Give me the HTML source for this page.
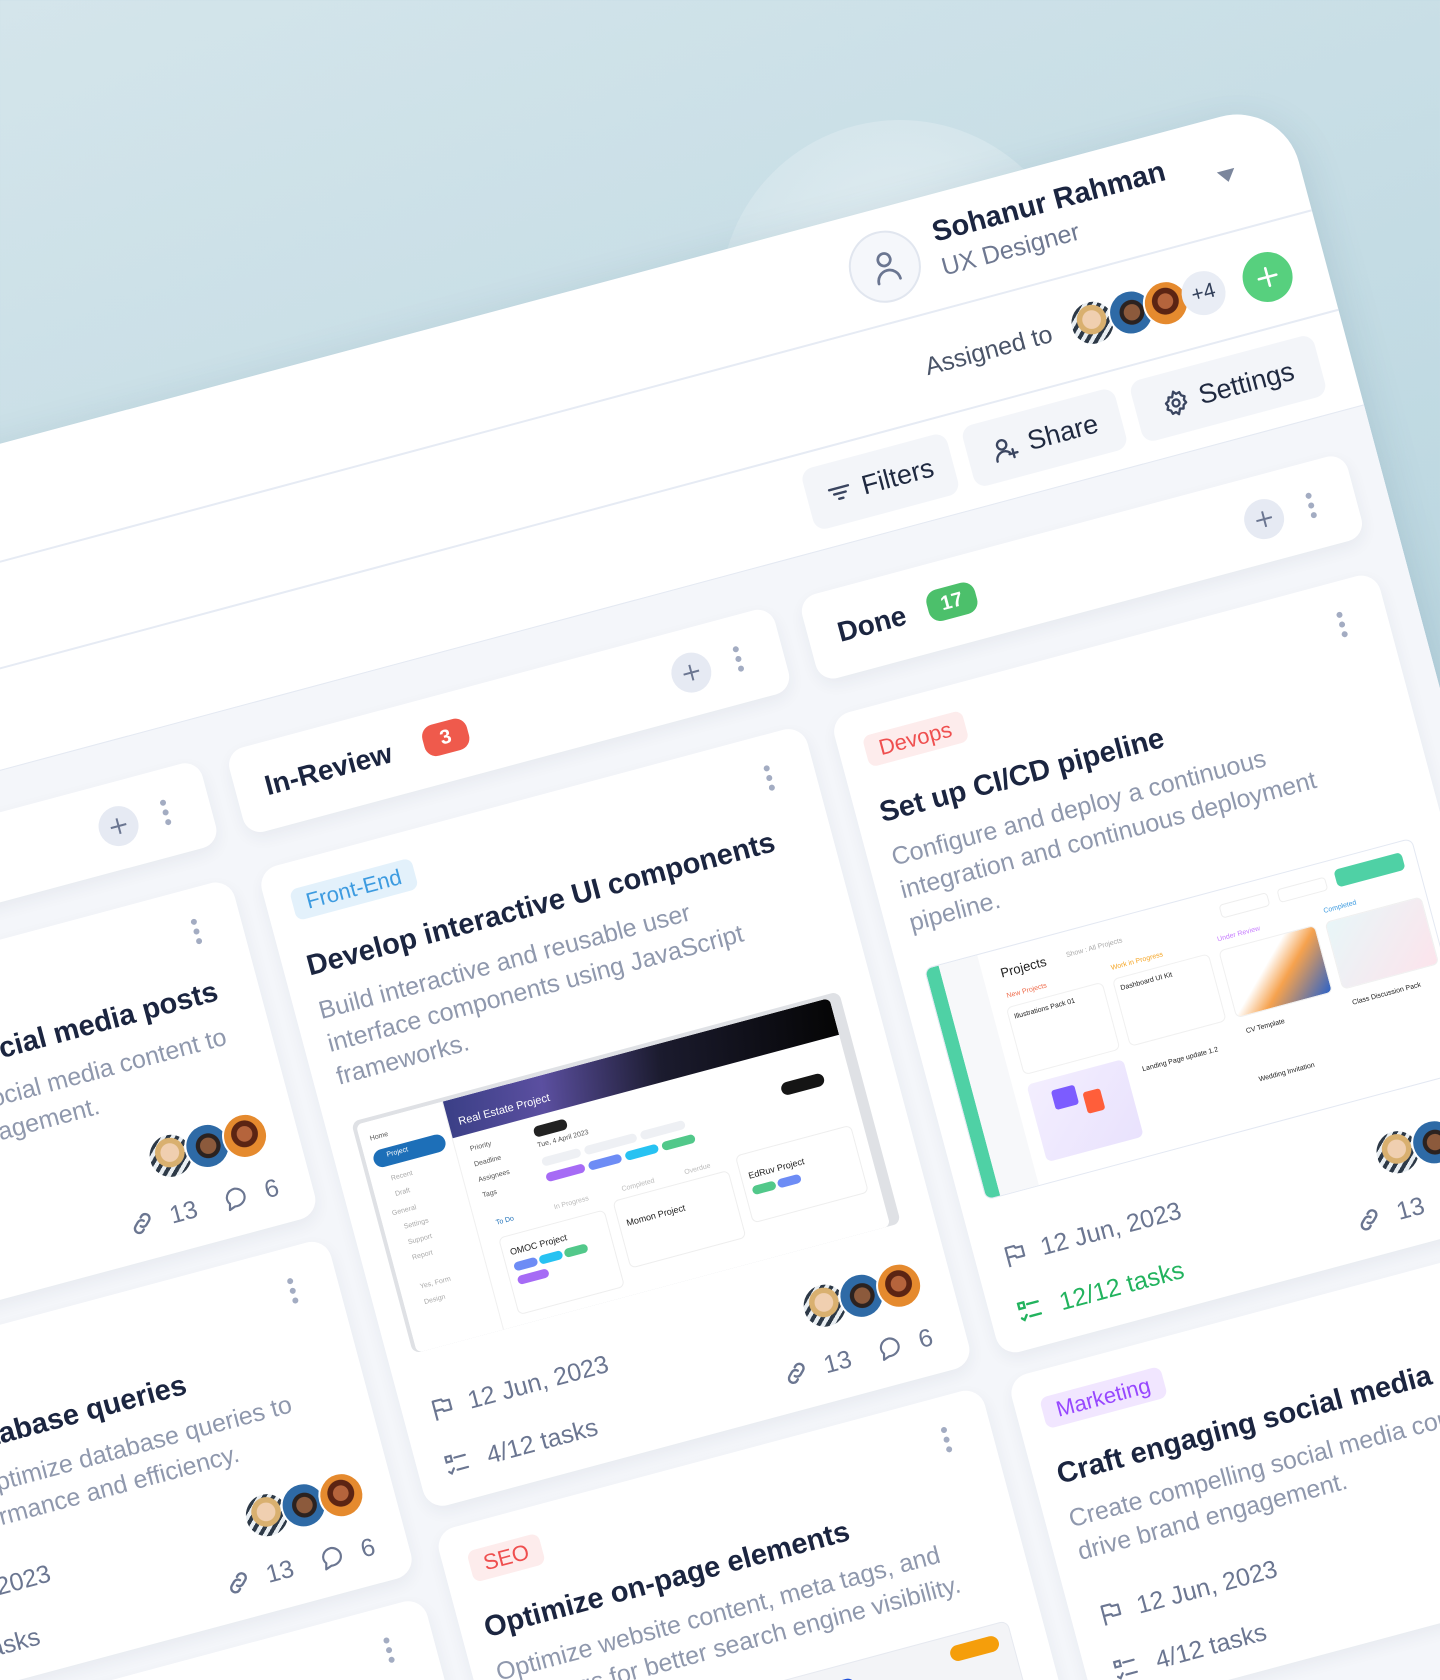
<!DOCTYPE html>
<html><head><meta charset="utf-8">
<style>
*{box-sizing:border-box;margin:0;padding:0}
html,body{width:1440px;height:1680px;overflow:hidden}
body{font-family:"Liberation Sans",sans-serif;background:linear-gradient(160deg,#d4e5eb 0%,#bfd9e2 45%,#a8cad7 100%);position:relative}
.globe{position:absolute;left:720px;top:120px;width:360px;height:360px;border-radius:50%;background:radial-gradient(circle at 50% 40%,rgba(235,243,246,.75),rgba(220,234,239,.5) 60%,rgba(210,228,235,0) 72%)}
.frame{position:absolute;left:225px;top:752px;width:0;height:0;transform:rotate(-15deg);transform-origin:0 0}
.abs{position:absolute}
.win{position:absolute;left:-1600px;top:-356px;width:2790px;height:2700px;background:#fff;border-top-right-radius:64px;box-shadow:0 10px 40px rgba(40,80,110,.15)}
.board{position:absolute;left:-1600px;top:-41px;width:2790px;height:2600px;background:#f4f6fa;border-top:1px solid #e4e9f2}
.hline{position:absolute;left:-1600px;width:2790px;height:2px;background:#e6ebf4}
.btn{position:absolute;top:-123px;height:63px;background:#f3f5f9;border-radius:12px;display:flex;align-items:center;justify-content:center;gap:10px;font-size:27px;color:#1f2940}
.colh{position:absolute;top:0;width:565px;height:87px;background:#fff;border-radius:18px;box-shadow:0 6px 16px rgba(30,50,90,.06)}
.colh .t{position:absolute;left:30px;top:28px;font-size:28px;font-weight:bold;color:#1b2540;line-height:32px}
.badge{position:absolute;height:32px;border-radius:12px;color:#fff;font-weight:bold;font-size:20px;line-height:32px;text-align:center}
.plus{position:absolute;left:451px;top:24px;width:40px;height:40px;border-radius:50%;background:#e6eaf3}
.dots{position:absolute;width:6px}
.dots i{display:block;width:6px;height:6px;border-radius:50%;background:#a3acc2;margin-bottom:4px}
.card{position:absolute;width:565px;background:#fff;border-radius:20px;box-shadow:0 6px 16px rgba(30,50,90,.06);overflow:hidden}
.tag{position:absolute;left:26px;top:27px;height:32px;padding:0 14px;border-radius:8px;font-size:22px;line-height:32px}
.ttl{position:absolute;left:24px;top:90px;font-size:29px;font-weight:bold;color:#1b2540;line-height:33px;white-space:nowrap}
.desc{position:absolute;left:24px;top:135px;font-size:25px;line-height:34px;color:#8f98ad;white-space:nowrap}
.img{position:absolute;left:26px;width:505px;height:240px;border-radius:8px;overflow:hidden}
.meta{position:absolute;font-size:25px;line-height:28px;color:#6b7691;white-space:nowrap}
.ico{position:absolute}
.av{position:absolute;width:46px;height:46px;border-radius:50%;border:2px solid #fff}
.a1{background:radial-gradient(circle at 50% 42%,#f0cfb0 0 28%,#d9b06f 30% 45%,transparent 47%),repeating-linear-gradient(135deg,#2d3947 0 4px,#e9eef2 4px 8px)}
.a2{background:radial-gradient(circle at 52% 50%,#8c5a3c 0 26%,#2b2220 28% 40%,transparent 42%),#2e6aa6}
.a3{background:radial-gradient(circle at 50% 45%,#b5643c 0 24%,#5b2413 26% 42%,transparent 44%),#e58a2e}
.s{position:absolute;font-size:7px;color:#555;white-space:nowrap}
.chip{position:absolute;height:9px;border-radius:5px}
</style></head><body>
<div class="globe"></div>
<div class="frame">
  <div class="win"></div>
  <div class="hline" style="top:-243px"></div>
  <div class="hline" style="top:-140px"></div>
  <div class="board"></div>

  <div class="abs" style="left:727px;top:-334px;width:72px;height:72px;border-radius:50%;background:#f5f7fb;border:2px solid #e1e6ef">
    <svg class="abs" style="left:18px;top:16px" width="34" height="36" viewBox="0 0 24 26" fill="none" stroke="#6b7691" stroke-width="2" stroke-linecap="round"><circle cx="12" cy="8" r="4.5"/><path d="M4 24a8 8 0 0 1 16 0"/></svg>
  </div>
  <div class="abs" style="left:818px;top:-334px;font-size:29px;font-weight:bold;color:#1b2540;line-height:32px;white-space:nowrap">Sohanur Rahman</div>
  <div class="abs" style="left:818px;top:-296px;font-size:25px;color:#6e7891;line-height:28px;white-space:nowrap">UX Designer</div>
  <svg class="abs" style="left:1107px;top:-304px" width="20" height="14" viewBox="0 0 20 14"><path d="M1 1h18L10 13z" fill="#7b869c"/></svg>

  <div class="abs" style="left:724px;top:-204px;width:183px;text-align:right;font-size:25px;color:#4a5468;line-height:28px">Assigned to</div>
  <div class="av a1" style="left:926px;top:-213px"></div>
  <div class="av a2" style="left:966px;top:-213px"></div>
  <div class="av a3" style="left:1002px;top:-213px"></div>
  <div class="abs" style="left:1042px;top:-212px;width:44px;height:44px;border-radius:50%;background:#e9edf5;font-size:21px;color:#33405a;text-align:center;line-height:44px">+4</div>
  <div class="abs" style="left:1105px;top:-214px;width:50px;height:50px;border-radius:50%;background:#57d07e">
    <svg class="abs" style="left:13px;top:13px" width="24" height="24" viewBox="0 0 24 24" stroke="#fff" stroke-width="2.6" stroke-linecap="round"><path d="M12 3v18M3 12h18"/></svg>
  </div>

  <div class="btn" style="left:628px;width:150px">
    <svg width="26" height="26" viewBox="0 0 24 24" fill="none" stroke="#3a4560" stroke-width="2.2" stroke-linecap="round"><path d="M3 7h18M6.5 12h11M10 17h4"/></svg>Filters</div>
  <div class="btn" style="left:794px;width:158px">
    <svg width="28" height="28" viewBox="0 0 24 24" fill="none" stroke="#3a4560" stroke-width="2" stroke-linecap="round"><circle cx="10" cy="8" r="4"/><path d="M3 21a7 7 0 0 1 12-5M18 14v7M14.5 17.5h7"/></svg>Share</div>
  <div class="btn" style="left:968px;width:190px">
    <svg width="28" height="28" viewBox="0 0 24 24" fill="none" stroke="#3a4560" stroke-width="2" stroke-linejoin="round"><path d="M12 2l2 2.5 3-.8.8 3 2.7 1.6-1.3 2.7 1.3 2.7-2.7 1.6-.8 3-3-.8L12 22l-2-2.5-3 .8-.8-3L3.5 15.7 4.8 13 3.5 10.3 6.2 8.7l.8-3 3 .8z"/><circle cx="12" cy="12" r="3"/></svg>Settings</div>

  <div class="colh" style="left:-593px"><div class="t">In Progress</div><div class="badge" style="left:210px;top:27px;width:46px;background:#f5a524">5</div>
    <div class="plus"><svg class="abs" style="left:10px;top:10px" width="20" height="20" viewBox="0 0 20 20" stroke="#6b7691" stroke-width="2"><path d="M10 2v16M2 10h16"/></svg></div>
    <div class="dots" style="left:517px;top:30px"><i></i><i></i><i></i></div></div>
  <div class="colh" style="left:0"><div class="t">In-Review</div><div class="badge" style="left:194px;top:27px;width:46px;background:#ef5a4c">3</div>
    <div class="plus"><svg class="abs" style="left:10px;top:10px" width="20" height="20" viewBox="0 0 20 20" stroke="#6b7691" stroke-width="2"><path d="M10 2v16M2 10h16"/></svg></div>
    <div class="dots" style="left:517px;top:30px"><i></i><i></i><i></i></div></div>
  <div class="colh" style="left:593px"><div class="t">Done</div><div class="badge" style="left:123px;top:27px;width:50px;background:#4cc06b">17</div>
    <div class="plus"><svg class="abs" style="left:10px;top:10px" width="20" height="20" viewBox="0 0 20 20" stroke="#6b7691" stroke-width="2"><path d="M10 2v16M2 10h16"/></svg></div>
    <div class="dots" style="left:517px;top:30px"><i></i><i></i><i></i></div></div>

  <div class="card" style="left:-593px;top:123px;height:348px">
    <div class="tag" style="background:#f1e6ff;color:#9747ff">Marketing</div>
    <div class="dots" style="left:516px;top:30px"><i></i><i></i><i></i></div>
    <div class="ttl">Plan and publish social media posts</div>
    <div class="desc">Design and schedule social media content to<br>increase audience engagement.</div>
    <div class="av a1" style="left:413px;top:230px"></div><div class="av a2" style="left:451px;top:230px"></div><div class="av a3" style="left:490px;top:230px"></div>
    <svg class="ico" style="left:27px;top:240px" width="26" height="26" viewBox="0 0 24 24" fill="none" stroke="#6b7691" stroke-width="2" stroke-linejoin="round"><path d="M5 22V4h8l1 2h6v9h-7l-1-2H5"/></svg>
    <div class="meta" style="left:67px;top:239px">12 Jun, 2023</div>
    <svg class="ico" style="left:27px;top:298px" width="26" height="26" viewBox="0 0 24 24" fill="none" stroke="#6b7691" stroke-width="2" stroke-linecap="round"><path d="M3 3h5v5H3zM11 5.5h10M11 17h10M3 17l2 2 3-4"/></svg>
    <div class="meta" style="left:71px;top:297px">4/12 tasks</div>
    <svg class="ico" style="left:378px;top:298px" width="26" height="26" viewBox="0 0 24 24" fill="none" stroke="#6b7691" stroke-width="2.2" stroke-linecap="round"><path d="M10 14a4 4 0 0 0 5.7 0l3-3a4 4 0 0 0-5.7-5.7l-1 1M14 10a4 4 0 0 0-5.7 0l-3 3a4 4 0 0 0 5.7 5.7l1-1"/></svg>
    <div class="meta" style="left:420px;top:297px">13</div>
    <svg class="ico" style="left:476px;top:298px" width="26" height="26" viewBox="0 0 24 24" fill="none" stroke="#6b7691" stroke-width="2" stroke-linejoin="round"><path d="M12 3a9 8 0 0 0-7.5 12.5L3 21l5.5-2A9 8 0 1 0 12 3z"/></svg>
    <div class="meta" style="left:518px;top:297px">6</div>
  </div>
  <div class="card" style="left:-593px;top:495px;height:348px">
    <div class="tag" style="background:#e3f1fb;color:#3d9be0">Back-End</div>
    <div class="dots" style="left:516px;top:30px"><i></i><i></i><i></i></div>
    <div class="ttl">Optimize database queries</div>
    <div class="desc">Analyze and optimize database queries to<br>improve performance and efficiency.</div>
    <div class="av a1" style="left:413px;top:230px"></div><div class="av a2" style="left:451px;top:230px"></div><div class="av a3" style="left:490px;top:230px"></div>
    <svg class="ico" style="left:27px;top:240px" width="26" height="26" viewBox="0 0 24 24" fill="none" stroke="#6b7691" stroke-width="2" stroke-linejoin="round"><path d="M5 22V4h8l1 2h6v9h-7l-1-2H5"/></svg>
    <div class="meta" style="left:67px;top:239px">12 Jun, 2023</div>
    <svg class="ico" style="left:27px;top:298px" width="26" height="26" viewBox="0 0 24 24" fill="none" stroke="#6b7691" stroke-width="2" stroke-linecap="round"><path d="M3 3h5v5H3zM11 5.5h10M11 17h10M3 17l2 2 3-4"/></svg>
    <div class="meta" style="left:71px;top:297px">4/12 tasks</div>
    <svg class="ico" style="left:378px;top:298px" width="26" height="26" viewBox="0 0 24 24" fill="none" stroke="#6b7691" stroke-width="2.2" stroke-linecap="round"><path d="M10 14a4 4 0 0 0 5.7 0l3-3a4 4 0 0 0-5.7-5.7l-1 1M14 10a4 4 0 0 0-5.7 0l-3 3a4 4 0 0 0 5.7 5.7l1-1"/></svg>
    <div class="meta" style="left:420px;top:297px">13</div>
    <svg class="ico" style="left:476px;top:298px" width="26" height="26" viewBox="0 0 24 24" fill="none" stroke="#6b7691" stroke-width="2" stroke-linejoin="round"><path d="M12 3a9 8 0 0 0-7.5 12.5L3 21l5.5-2A9 8 0 1 0 12 3z"/></svg>
    <div class="meta" style="left:518px;top:297px">6</div>
  </div>
  <div class="card" style="left:-593px;top:867px;height:348px">
    <div class="dots" style="left:516px;top:30px"><i></i><i></i><i></i></div>
    <div class="ttl">Write API documentation</div>
  </div>

  <div class="card" style="left:0;top:123px;height:662px">
    <div class="tag" style="background:#e3f1fb;color:#3d9be0">Front-End</div>
    <div class="dots" style="left:516px;top:30px"><i></i><i></i><i></i></div>
    <div class="ttl">Develop interactive UI components</div>
    <div class="desc">Build interactive and reusable user<br>interface components using JavaScript<br>frameworks.</div>
    <div class="img" style="top:267px;background:#dfe1e5">
      <div class="abs" style="left:4px;top:4px;width:490px;height:236px;background:#fff;border-radius:6px;overflow:hidden">
        <div class="abs" style="left:0;top:0;width:90px;height:236px;background:#fff;border-right:1px solid #f0f0f0"></div>
        <div class="s" style="left:10px;top:14px">Home</div>
        <div class="abs" style="left:8px;top:30px;width:74px;height:18px;border-radius:9px;background:#1d6fb8"></div>
        <div class="s" style="left:22px;top:34px;color:#fff">Project</div>
        <div class="s" style="left:20px;top:58px;color:#aaa">Recent</div><div class="s" style="left:20px;top:74px;color:#aaa">Draft</div>
        <div class="s" style="left:12px;top:92px;color:#aaa">General</div><div class="s" style="left:20px;top:108px;color:#aaa">Settings</div>
        <div class="s" style="left:20px;top:124px;color:#aaa">Support</div><div class="s" style="left:20px;top:140px;color:#aaa">Report</div>
        <div class="s" style="left:20px;top:170px;color:#aaa">Yes, Form</div><div class="s" style="left:20px;top:186px;color:#aaa">Design</div>
        <div class="abs" style="left:90px;top:0;width:400px;height:38px;background:linear-gradient(100deg,#3a3f86 0%,#5b4fa0 25%,#1b1b2e 55%,#050505 100%)"></div>
        <div class="s" style="left:100px;top:18px;color:#fff;font-size:11px">Real Estate Project</div>
        <div class="s" style="left:104px;top:50px">Priority</div><div class="s" style="left:104px;top:66px">Deadline</div>
        <div class="s" style="left:104px;top:82px">Assignees</div><div class="s" style="left:104px;top:98px">Tags</div>
        <div class="chip" style="left:170px;top:48px;width:34px;height:11px;background:#222"></div>
        <div class="s" style="left:170px;top:64px">Tue, 4 April 2023</div>
        <div class="chip" style="left:170px;top:80px;width:40px;background:#eef0f4"></div><div class="chip" style="left:214px;top:80px;width:54px;background:#eef0f4"></div><div class="chip" style="left:272px;top:80px;width:46px;background:#eef0f4"></div>
        <div class="chip" style="left:170px;top:96px;width:40px;background:#a66bf5"></div><div class="chip" style="left:214px;top:96px;width:34px;background:#6d8cf5"></div><div class="chip" style="left:252px;top:96px;width:34px;background:#27c2f2"></div><div class="chip" style="left:290px;top:96px;width:34px;background:#52c88a"></div>
        <div class="chip" style="left:420px;top:70px;width:44px;height:13px;background:#151515;border-radius:7px"></div>
        <div class="s" style="left:110px;top:128px;color:#1d6fb8">To Do</div><div class="s" style="left:170px;top:128px;color:#bbb">In Progress</div><div class="s" style="left:240px;top:128px;color:#bbb">Completed</div><div class="s" style="left:305px;top:128px;color:#bbb">Overdue</div>
        <div class="abs" style="left:108px;top:146px;width:110px;height:80px;border:1px solid #eee;border-radius:6px"></div>
        <div class="s" style="left:116px;top:158px;color:#222;font-size:9px">OMOC Project</div>
        <div class="chip" style="left:116px;top:174px;width:24px;background:#6d8cf5"></div><div class="chip" style="left:142px;top:174px;width:24px;background:#27c2f2"></div><div class="chip" style="left:168px;top:174px;width:24px;background:#52c88a"></div>
        <div class="chip" style="left:116px;top:188px;width:32px;background:#a66bf5"></div>
        <div class="abs" style="left:228px;top:140px;width:120px;height:70px;border:1px solid #eee;border-radius:6px"></div>
        <div class="s" style="left:236px;top:160px;color:#222;font-size:9px">Momon Project</div>
        <div class="abs" style="left:358px;top:128px;width:120px;height:70px;border:1px solid #eee;border-radius:6px"></div>
        <div class="s" style="left:366px;top:146px;color:#222;font-size:9px">EdRuv Project</div>
        <div class="chip" style="left:366px;top:162px;width:24px;background:#52c88a"></div><div class="chip" style="left:392px;top:162px;width:24px;background:#6d8cf5"></div>
      </div>
    </div>
    <div class="av a1" style="left:413px;top:544px"></div><div class="av a2" style="left:451px;top:544px"></div><div class="av a3" style="left:490px;top:544px"></div>
    <svg class="ico" style="left:27px;top:554px" width="26" height="26" viewBox="0 0 24 24" fill="none" stroke="#6b7691" stroke-width="2" stroke-linejoin="round"><path d="M5 22V4h8l1 2h6v9h-7l-1-2H5"/></svg>
    <div class="meta" style="left:67px;top:553px">12 Jun, 2023</div>
    <svg class="ico" style="left:27px;top:612px" width="26" height="26" viewBox="0 0 24 24" fill="none" stroke="#6b7691" stroke-width="2" stroke-linecap="round"><path d="M3 3h5v5H3zM11 5.5h10M11 17h10M3 17l2 2 3-4"/></svg>
    <div class="meta" style="left:71px;top:611px">4/12 tasks</div>
    <svg class="ico" style="left:378px;top:612px" width="26" height="26" viewBox="0 0 24 24" fill="none" stroke="#6b7691" stroke-width="2.2" stroke-linecap="round"><path d="M10 14a4 4 0 0 0 5.7 0l3-3a4 4 0 0 0-5.7-5.7l-1 1M14 10a4 4 0 0 0-5.7 0l-3 3a4 4 0 0 0 5.7 5.7l1-1"/></svg>
    <div class="meta" style="left:420px;top:611px">13</div>
    <svg class="ico" style="left:476px;top:612px" width="26" height="26" viewBox="0 0 24 24" fill="none" stroke="#6b7691" stroke-width="2" stroke-linejoin="round"><path d="M12 3a9 8 0 0 0-7.5 12.5L3 21l5.5-2A9 8 0 1 0 12 3z"/></svg>
    <div class="meta" style="left:518px;top:611px">6</div>
  </div>
  <div class="card" style="left:0;top:808px;height:640px">
    <div class="tag" style="background:#fdecec;color:#ef4f4f">SEO</div>
    <div class="dots" style="left:516px;top:30px"><i></i><i></i><i></i></div>
    <div class="ttl">Optimize on-page elements</div>
    <div class="desc">Optimize website content, meta tags, and<br>headings for better search engine visibility.</div>
    <div class="img" style="top:233px;background:#f3f4f7;border:1px solid #e6e9f0">
      <div class="abs" style="left:300px;top:14px;width:40px;height:14px;border-radius:7px;background:#1d4ed8"></div>
      <div class="abs" style="left:440px;top:10px;width:50px;height:16px;border-radius:8px;background:#f59e0b"></div>
    </div>
  </div>

  <div class="card" style="left:593px;top:123px;height:662px">
    <div class="tag" style="background:#fdecec;color:#ef4f4f">Devops</div>
    <div class="dots" style="left:516px;top:30px"><i></i><i></i><i></i></div>
    <div class="ttl">Set up CI/CD pipeline</div>
    <div class="desc">Configure and deploy a continuous<br>integration and continuous deployment<br>pipeline.</div>
    <div class="img" style="top:267px;background:#fff;border:1px solid #e3e8f2">
      <div class="abs" style="left:0;top:0;width:14px;height:240px;background:#4fd1a5"></div>
      <div class="abs" style="left:14px;top:0;width:40px;height:240px;background:#f7f8fa"></div>
      <div class="s" style="left:72px;top:16px;font-size:13px;color:#222">Projects</div>
      <div class="s" style="left:140px;top:20px;color:#aaa">Show : All Projects</div>
      <div class="abs" style="left:300px;top:14px;width:50px;height:14px;border:1px solid #eee;border-radius:4px"></div>
      <div class="abs" style="left:360px;top:14px;width:50px;height:14px;border:1px solid #eee;border-radius:4px"></div>
      <div class="abs" style="left:420px;top:10px;width:70px;height:18px;border-radius:5px;background:#4fd1a5"></div>
      <div class="s" style="left:72px;top:44px;color:#ef6b4a">New Projects</div>
      <div class="s" style="left:180px;top:44px;color:#f5a524">Work in Progress</div>
      <div class="s" style="left:290px;top:44px;color:#c77dff">Under Review</div>
      <div class="s" style="left:400px;top:44px;color:#3d9be0">Completed</div>
      <div class="abs" style="left:68px;top:58px;width:100px;height:70px;border:1px solid #f0f0f0;border-radius:6px"></div>
      <div class="s" style="left:74px;top:66px;color:#222">Illustrations Pack 01</div>
      <div class="abs" style="left:178px;top:58px;width:100px;height:70px;border:1px solid #f0f0f0;border-radius:6px"></div>
      <div class="s" style="left:184px;top:66px;color:#222">Dashboard UI Kit</div>
      <div class="abs" style="left:288px;top:58px;width:100px;height:70px;border:1px solid #f0f0f0;border-radius:6px;background:linear-gradient(135deg,#fff 40%,#f6a24e 60%,#2b62c9)"></div>
      <div class="abs" style="left:398px;top:58px;width:100px;height:70px;border:1px solid #f0f0f0;border-radius:6px;background:linear-gradient(135deg,#e8f6f8,#fce4ec)"></div>
      <div class="abs" style="left:68px;top:138px;width:100px;height:80px;border-radius:6px;background:linear-gradient(135deg,#f3eefe,#e9e2fd)"></div>
      <div class="abs" style="left:90px;top:150px;width:24px;height:20px;background:#7c5cff;border-radius:3px"></div>
      <div class="abs" style="left:120px;top:160px;width:18px;height:22px;background:#ff5e3a;border-radius:3px"></div>
      <div class="s" style="left:184px;top:150px;color:#222">Landing Page update 1.2</div>
      <div class="s" style="left:294px;top:140px;color:#222">CV Template</div>
      <div class="s" style="left:294px;top:190px;color:#222">Wedding Invitation</div>
      <div class="s" style="left:404px;top:140px;color:#222">Class Discussion Pack</div>
    </div>
    <div class="av a1" style="left:413px;top:544px"></div><div class="av a2" style="left:451px;top:544px"></div><div class="av a3" style="left:490px;top:544px"></div>
    <svg class="ico" style="left:27px;top:554px" width="26" height="26" viewBox="0 0 24 24" fill="none" stroke="#6b7691" stroke-width="2" stroke-linejoin="round"><path d="M5 22V4h8l1 2h6v9h-7l-1-2H5"/></svg>
    <div class="meta" style="left:67px;top:553px">12 Jun, 2023</div>
    <svg class="ico" style="left:27px;top:612px" width="26" height="26" viewBox="0 0 24 24" fill="none" stroke="#22b35e" stroke-width="2.2" stroke-linecap="round"><path d="M3 3h5v5H3zM11 5.5h10M11 17h10M3 17l2 2 3-4"/></svg>
    <div class="meta" style="left:71px;top:611px;color:#22b35e">12/12 tasks</div>
    <svg class="ico" style="left:378px;top:612px" width="26" height="26" viewBox="0 0 24 24" fill="none" stroke="#6b7691" stroke-width="2.2" stroke-linecap="round"><path d="M10 14a4 4 0 0 0 5.7 0l3-3a4 4 0 0 0-5.7-5.7l-1 1M14 10a4 4 0 0 0-5.7 0l-3 3a4 4 0 0 0 5.7 5.7l1-1"/></svg>
    <div class="meta" style="left:420px;top:611px">13</div>
    <svg class="ico" style="left:476px;top:612px" width="26" height="26" viewBox="0 0 24 24" fill="none" stroke="#6b7691" stroke-width="2" stroke-linejoin="round"><path d="M12 3a9 8 0 0 0-7.5 12.5L3 21l5.5-2A9 8 0 1 0 12 3z"/></svg>
    <div class="meta" style="left:518px;top:611px">6</div>
  </div>
  <div class="card" style="left:593px;top:808px;height:348px">
    <div class="tag" style="background:#f1e6ff;color:#9747ff">Marketing</div>
    <div class="dots" style="left:516px;top:30px"><i></i><i></i><i></i></div>
    <div class="ttl">Craft engaging social media campaigns</div>
    <div class="desc">Create compelling social media content to<br>drive brand engagement.</div>
    <svg class="ico" style="left:27px;top:240px" width="26" height="26" viewBox="0 0 24 24" fill="none" stroke="#6b7691" stroke-width="2" stroke-linejoin="round"><path d="M5 22V4h8l1 2h6v9h-7l-1-2H5"/></svg>
    <div class="meta" style="left:67px;top:239px">12 Jun, 2023</div>
    <svg class="ico" style="left:27px;top:298px" width="26" height="26" viewBox="0 0 24 24" fill="none" stroke="#6b7691" stroke-width="2" stroke-linecap="round"><path d="M3 3h5v5H3zM11 5.5h10M11 17h10M3 17l2 2 3-4"/></svg>
    <div class="meta" style="left:71px;top:297px">4/12 tasks</div>
  </div>
</div>
</body></html>
